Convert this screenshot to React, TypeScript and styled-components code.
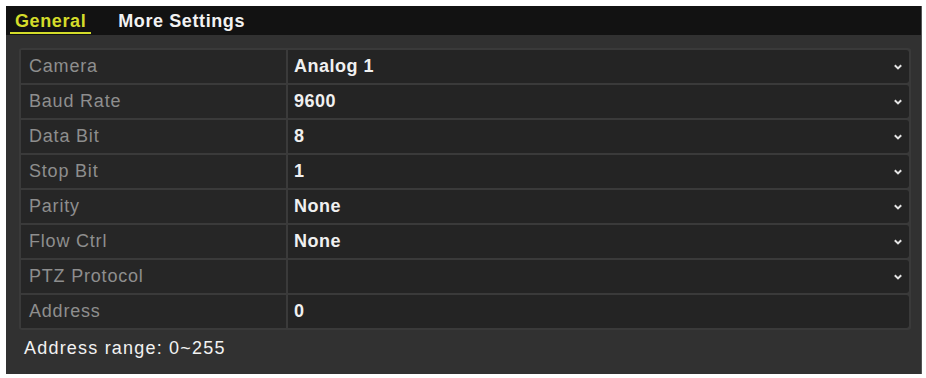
import React from 'react';
import styled, { createGlobalStyle } from 'styled-components';

const GlobalStyle = createGlobalStyle`
  html, body {
    margin: 0;
    padding: 0;
    background: #ffffff;
  }
  body {
    font-family: 'Liberation Sans', Arial, sans-serif;
  }
`;

const Panel = styled.div`
  margin: 6px;
  width: 916px;
  height: 368px;
  background: #313131;
  box-sizing: border-box;
  border-right: 1px solid #555;
  display: flex;
  flex-direction: column;
`;

const TabBar = styled.div`
  height: 29px;
  background: #121212;
  display: flex;
  align-items: center;
  gap: 22px;
  padding-left: 4px;
`;

const Tab = styled.div<{ $active?: boolean }>`
  font-size: 18px;
  font-weight: bold;
  letter-spacing: 0.6px;
  color: ${(p) => (p.$active ? '#d4dc2a' : '#f2f2f2')};
  padding: 2px 5px 1px;
  border-bottom: 2px solid ${(p) => (p.$active ? '#d4dc2a' : 'transparent')};
  margin-top: 2px;
  line-height: 20px;
`;

const Table = styled.div`
  margin: 13px 10px 0 13px;
  background: #3a3a3a;
  padding: 2px;
  border-radius: 3px;
  display: flex;
  flex-direction: column;
  gap: 2px;
`;

const Row = styled.div`
  display: flex;
  height: 33px;
  gap: 2px;
`;

const LabelCell = styled.div`
  width: 265px;
  background: #262626;
  color: #8e8e8e;
  font-size: 18px;
  letter-spacing: 0.8px;
  display: flex;
  align-items: center;
  padding-left: 8px;
  box-sizing: border-box;
`;

const ValueCell = styled.div`
  flex: 1;
  background: #242424;
  color: #f0f0f0;
  font-size: 18px;
  font-weight: bold;
  letter-spacing: 0.5px;
  display: flex;
  align-items: center;
  justify-content: space-between;
  padding: 0 7px 0 6px;
  border-radius: 0 3px 3px 0;
`;

const Chevron = styled.svg`
  width: 8px;
  height: 6px;
`;

const Note = styled.div`
  color: #f2f2f2;
  font-size: 18px;
  letter-spacing: 1.2px;
  padding: 8px 0 0 18px;
`;

const rows: { label: string; value: string; select: boolean }[] = [
  { label: 'Camera', value: 'Analog 1', select: true },
  { label: 'Baud Rate', value: '9600', select: true },
  { label: 'Data Bit', value: '8', select: true },
  { label: 'Stop Bit', value: '1', select: true },
  { label: 'Parity', value: 'None', select: true },
  { label: 'Flow Ctrl', value: 'None', select: true },
  { label: 'PTZ Protocol', value: '', select: true },
  { label: 'Address', value: '0', select: false },
];

export default function App() {
  return (
    <>
      <GlobalStyle />
      <Panel>
        <TabBar>
          <Tab $active>General</Tab>
          <Tab>More Settings</Tab>
        </TabBar>
        <Table>
          {rows.map((r) => (
            <Row key={r.label}>
              <LabelCell>{r.label}</LabelCell>
              <ValueCell>
                <span>{r.value}</span>
                {r.select && (
                  <Chevron viewBox="0 0 8 6">
                    <path d="M0.8 1.2 L4 4.4 L7.2 1.2" fill="none" stroke="#e4e4e4" strokeWidth="2" />
                  </Chevron>
                )}
              </ValueCell>
            </Row>
          ))}
        </Table>
        <Note>Address range: 0~255</Note>
      </Panel>
    </>
  );
}
